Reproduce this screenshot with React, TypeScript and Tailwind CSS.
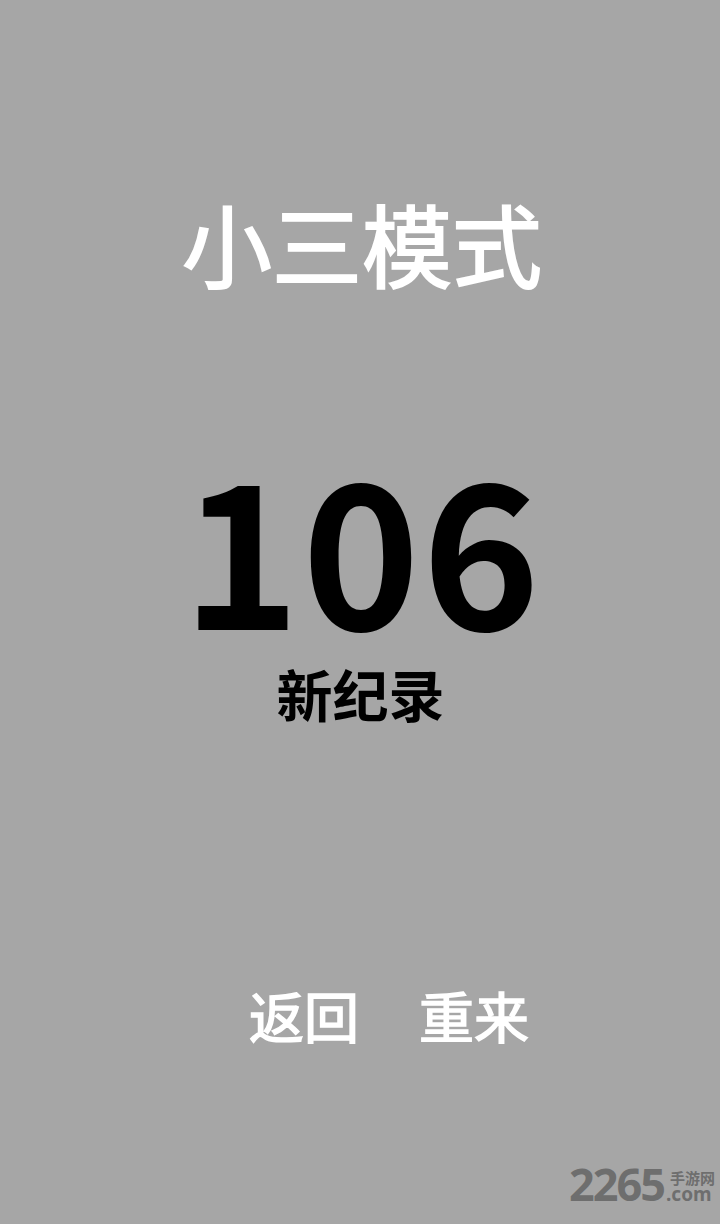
export default function App() {
  const cjk = { fontFamily: '"Noto Sans CJK SC", "Noto Sans", sans-serif' };

  return (
    <div className="relative w-[720px] h-[1224px] bg-[#a6a6a6] overflow-hidden" style={cjk}>
      <div className="flex flex-col items-center">
        <h1 className="mt-[197px] text-[90px] leading-none font-normal text-white ml-[4px] [-webkit-text-stroke:2px_white]">
          小三模式
        </h1>
        <div className="mt-[156px] text-[200px] leading-none font-bold text-black ml-[4px] tracking-[2px]">106</div>
        <div className="mt-[22px] text-[56px] leading-none font-bold text-black ml-[1px]">新纪录</div>
      </div>

      <div className="mt-[266px] flex pl-[249px] gap-[60px] text-[55px] leading-none font-normal text-white [-webkit-text-stroke:1.5px_white]">
        <button>返回</button>
        <button>重来</button>
      </div>

      {/* watermark */}
      <div className="absolute right-[5px] bottom-[18px] flex items-end text-[#6e6e6e]">
        <span className="text-[45px] leading-none font-bold tracking-[-2px]" style={{ fontFamily: '"Noto Sans", sans-serif' }}>
          2265
        </span>
        <div className="flex flex-col items-start ml-[2px] mb-[2px]">
          <span className="text-[15px] leading-none font-bold ml-[4px]">手游网</span>
          <span className="text-[19px] leading-none font-bold" style={{ fontFamily: '"Noto Sans", sans-serif' }}>.com</span>
        </div>
      </div>
    </div>
  );
}
